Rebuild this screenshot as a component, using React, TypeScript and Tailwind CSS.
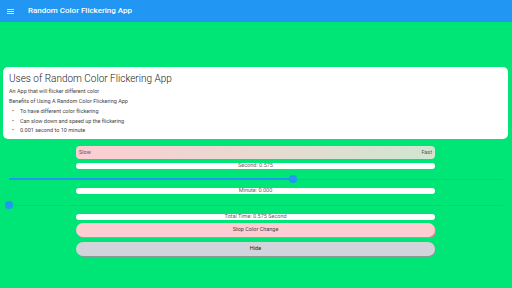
import React from "react";

function Slider({ pct }: { pct: number }) {
  return (
    <div className="relative h-[14px] mx-[9px]">
      <div className="absolute left-0 right-0 top-[6.5px] h-[1px] bg-[#1bbfa6]" />
      <div
        className="absolute left-0 top-[6px] h-[2px] bg-[#2196f3]"
        style={{ width: `${pct}%` }}
      />
      <div
        className="absolute top-[3px] w-[8px] h-[8px] -ml-[4px] rounded-full bg-[#2196f3]"
        style={{ left: `${pct}%` }}
      />
    </div>
  );
}

function InfoBar({ text }: { text: string }) {
  return (
    <div className="h-[6px] rounded-full bg-white flex items-center justify-center text-[5.5px] leading-none text-[#666]">
      {text}
    </div>
  );
}

export default function App() {
  return (
    <div
      className="w-[512px] h-[288px] bg-[#00e676] overflow-hidden flex flex-col"
      style={{ fontFamily: "Roboto, 'Noto Sans', sans-serif" }}
    >
      <div className="h-[22px] bg-[#2196f3] flex items-center shrink-0">
        <div className="ml-[7px] w-[7px] flex flex-col gap-[1px]">
          <div className="h-[1px] bg-[#c9e3fb]" />
          <div className="h-[1px] bg-[#c9e3fb]" />
          <div className="h-[1px] bg-[#c9e3fb]" />
        </div>
        <div className="ml-[14px] text-white text-[8px] font-medium leading-none">
          Random Color Flickering App
        </div>
      </div>

      <div className="mt-[45px] ml-[3px] mr-[4px] h-[72px] bg-white rounded-[5px] pl-[6px] pt-[6px] text-[#333]">
        <div className="text-[10px] font-light leading-none mt-[1px] text-[#222]">
          Uses of Random Color Flickering App
        </div>
        <div className="text-[5.5px] leading-none mt-[5px] text-[#444]">
          An App that will flicker different color
        </div>
        <div className="text-[5.5px] leading-none mt-[4.5px] text-[#444]">
          Benefits of Using A Random Color Flickering App
        </div>
        <ul className="mt-[4.5px] text-[5.5px] leading-none text-[#444] flex flex-col gap-[4px]">
          <li className="flex">
            <span className="w-[11px] pl-[3px]">•</span>To have different color flickering
          </li>
          <li className="flex">
            <span className="w-[11px] pl-[3px]">•</span>Can slow down and speed up the flickering
          </li>
          <li className="flex">
            <span className="w-[11px] pl-[3px]">•</span>0.001 second to 10 minute
          </li>
        </ul>
      </div>

      <div className="mt-[7px] w-[359px] ml-[76px] h-[13px] rounded-[4px] bg-linear-to-r from-[#fdcdd3] to-[#d0e6d0] flex items-center justify-between px-[3px] text-[5.5px] leading-none text-[#555]">
        <span>Slow</span>
        <span>Fast</span>
      </div>
      <div className="mt-[4px] w-[359px] ml-[76px]">
        <InfoBar text="Second: 0.575" />
      </div>
      <div className="mt-[3px]">
        <Slider pct={57.5} />
      </div>
      <div className="mt-[2px] w-[359px] ml-[76px]">
        <InfoBar text="Minute: 0.000" />
      </div>
      <div className="mt-[4px]">
        <Slider pct={0} />
      </div>
      <div className="mt-[2px] w-[359px] ml-[76px]">
        <InfoBar text="Total Time: 0.575 Second" />
      </div>
      <button className="mt-[3px] w-[359px] ml-[76px] h-[14px] rounded-full bg-[#fecdd3] shadow-[1px_1px_0_#e2828a] text-[5.5px] leading-none text-[#444] flex items-center justify-center">
        Stop Color Change
      </button>
      <button className="mt-[5px] w-[359px] ml-[76px] h-[14px] rounded-full bg-[#d1d5db] shadow-[1px_1px_0_#8a9a96] text-[5.5px] leading-none text-[#222] flex items-center justify-center">
        Hide
      </button>
    </div>
  );
}
